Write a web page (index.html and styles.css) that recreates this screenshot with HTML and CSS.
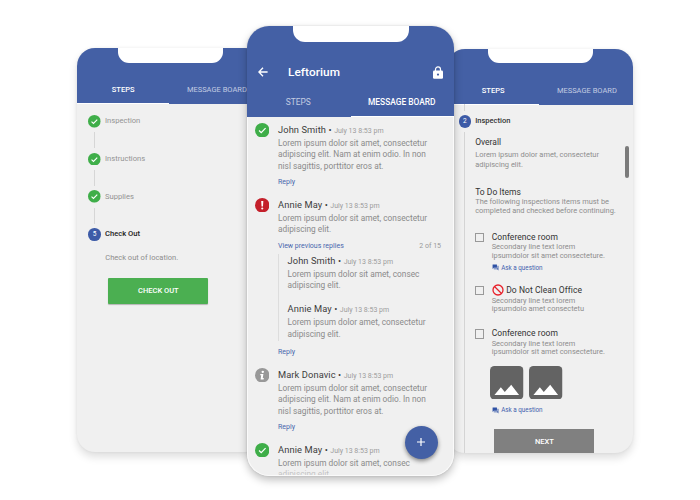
FILE: index.html
```html
<!DOCTYPE html>
<html lang="en">
<head>
<meta charset="utf-8">
<title>Leftorium</title>
<link rel="stylesheet" href="styles.css">
</head>
<body>
<svg width="0" height="0" class="defs">
  <symbol id="check" viewBox="0 0 14 14"><circle cx="7" cy="7" r="7" fill="#3fae49"/><path d="M3.9 7.3 6 9.3 10.2 5" fill="none" stroke="#fff" stroke-width="1.2"/></symbol>
  <symbol id="alert" viewBox="0 0 14 14"><circle cx="7" cy="7" r="7" fill="#c4202b"/><path d="M6 2.8h2L7.7 8.2H6.3z" fill="#fff"/><circle cx="7" cy="10.2" r="1" fill="#fff"/></symbol>
  <symbol id="info" viewBox="0 0 14 14"><circle cx="7" cy="7" r="7" fill="#989898"/><circle cx="7.5" cy="3.7" r="1.15" fill="#fff"/><path d="M5.2 5.7h2.9L7.5 9.6h1L8.3 11H5.4L6 7H5z" fill="#fff"/></symbol>
  <symbol id="chat" viewBox="0 0 24 24"><path d="M21 6h-2v9H6v2c0 .55.45 1 1 1h11l4 4V7c0-.55-.45-1-1-1zm-4 6V3c0-.55-.45-1-1-1H3c-.55 0-1 .45-1 1v14l4-4h10c.55 0 1-.45 1-1z" fill="#2f52a5"/></symbol>
  <symbol id="photo" viewBox="0 0 34 34"><rect width="34" height="34" rx="4.5" fill="#636363"/><path d="M4.5 29.5 11 21.5l4 5L21.5 19l8 10.5z" fill="#fff"/></symbol>
</svg>
<main class="stage">
  <section class="phone side">
    <header class="bar">
      <div class="notch"></div>
      <nav class="tabs"><span class="tab active">STEPS</span><span class="tab">MESSAGE BOARD</span></nav>
    </header>
    <div class="steps">
      <div class="step"><svg class="dot"><use href="#check"/></svg><span>Inspection</span></div>
      <div class="link"></div>
      <div class="step"><svg class="dot"><use href="#check"/></svg><span>Instructions</span></div>
      <div class="link"></div>
      <div class="step"><svg class="dot"><use href="#check"/></svg><span>Supplies</span></div>
      <div class="link"></div>
      <div class="step current"><b class="num">5</b><span>Check Out</span></div>
      <p class="hint">Check out of location.</p>
      <div class="btn green">CHECK OUT</div>
    </div>
  </section>

  <section class="phone main">
    <header class="bar">
      <div class="notch"></div>
      <div class="title">
        <svg class="back" viewBox="0 0 10 10"><path d="M9.6 5H1M5 .8.9 5 5 9.2" fill="none" stroke="#fff" stroke-width="1.3"/></svg>
        <h1>Leftorium</h1>
        <svg class="lock" viewBox="0 0 10 13"><path d="M2.5 5V3.4a2.5 2.5 0 0 1 5 0V5" fill="none" stroke="#fff" stroke-width="1.2"/><rect y="4.5" width="10" height="8.3" rx="1.2" fill="#fff"/><circle cx="5" cy="8.6" r="1.1" fill="#4460a5"/></svg>
      </div>
      <nav class="tabs"><span class="tab">STEPS</span><span class="tab active">MESSAGE BOARD</span></nav>
    </header>
    <div class="feed">
      <article class="post">
        <svg class="mark"><use href="#check"/></svg>
        <div class="content">
          <div class="name">John Smith • <time>July 13 8:53 pm</time></div>
          <p class="text">Lorem ipsum dolor sit amet, consectetur<br>adipiscing elit. Nam at enim odio. In non<br>nisl sagittis, porttitor eros at.</p>
          <a class="reply">Reply</a>
        </div>
      </article>
      <article class="post">
        <svg class="mark"><use href="#alert"/></svg>
        <div class="content">
          <div class="name">Annie May • <time>July 13 8:53 pm</time></div>
          <p class="text">Lorem ipsum dolor sit amet, consectetur<br>adipiscing elit.</p>
          <div class="previous"><a>View previous replies</a><span>2 of 15</span></div>
          <div class="thread">
            <div class="name">John Smith • <time>July 13 8:53 pm</time></div>
            <p class="text">Lorem ipsum dolor sit amet, consec<br>adipiscing elit.</p>
            <div class="name second">Annie May • <time>July 13 8:53 pm</time></div>
            <p class="text">Lorem ipsum dolor amet, consectetur<br>adipiscing elit.</p>
          </div>
          <a class="reply after">Reply</a>
        </div>
      </article>
      <article class="post">
        <svg class="mark"><use href="#info"/></svg>
        <div class="content">
          <div class="name">Mark Donavic • <time>July 13 8:53 pm</time></div>
          <p class="text">Lorem ipsum dolor sit amet, consectetur<br>adipiscing elit. Nam at enim odio. In non<br>nisl sagittis, porttitor eros at.</p>
          <a class="reply">Reply</a>
        </div>
      </article>
      <article class="post last">
        <svg class="mark"><use href="#check"/></svg>
        <div class="content">
          <div class="name">Annie May • <time>July 13 8:53 pm</time></div>
          <p class="text">Lorem ipsum dolor sit amet, consec<br><span class="faded">adipiscing elit.</span></p>
        </div>
      </article>
    </div>
    <div class="fab"><svg viewBox="0 0 10 10"><path d="M5 1v8M1 5h8" stroke="#fff" stroke-width="1.2"/></svg></div>
  </section>

  <section class="phone side right">
    <header class="bar">
      <div class="notch"></div>
      <nav class="tabs"><span class="tab active">STEPS</span><span class="tab">MESSAGE BOARD</span></nav>
    </header>
    <div class="inspect">
      <div class="rail"><i class="stub"></i><b class="num">2</b><i class="line"></i></div>
      <div class="form">
        <div class="heading">Inspection</div>
        <h2>Overall</h2>
        <p class="para wide">Lorem ipsum dolor amet, consectetur<br>adipiscing elit.</p>
        <h2 class="todo">To Do Items</h2>
        <p class="para">The following inspections items must be<br>completed and checked before continuing.</p>
        <div class="item">
          <i class="box"></i>
          <div><h3>Conference room</h3><p class="para">Secondary line text lorem<br>ipsumdolor sit amet consecteture.</p>
          <a class="ask"><svg><use href="#chat"/></svg>Ask a question</a></div>
        </div>
        <div class="item second">
          <i class="box"></i>
          <div><h3><svg class="ban" viewBox="0 0 12 12"><circle cx="6" cy="6" r="5" fill="none" stroke="#e8212b" stroke-width="1.3"/><path d="m2.5 2.5 7 7" stroke="#e8212b" stroke-width="1.3"/></svg>Do Not Clean Office</h3><p class="para">Secondary line text lorem<br>ipsumdolo amet consectetu</p></div>
        </div>
        <div class="item third">
          <i class="box"></i>
          <div><h3>Conference room</h3><p class="para">Secondary line text lorem<br>ipsumdolor sit amet consecteture.</p>
          <div class="photos"><svg><use href="#photo"/></svg><svg><use href="#photo"/></svg></div>
          <a class="ask low"><svg><use href="#chat"/></svg>Ask a question</a></div>
        </div>
        <div class="btn grey">NEXT</div>
      </div>
      <i class="scroll"></i>
    </div>
  </section>
</main>
</body>
</html>
```
FILE: styles.css
```css
* { box-sizing: border-box; margin: 0; padding: 0; }
body { width: 700px; height: 500px; overflow: hidden; background: #fff; font-family: Roboto, sans-serif; color: #333; white-space: nowrap; }
svg { display: block; flex: none; }
i, a { font-style: normal; display: block; }
.defs { position: absolute; }
.stage { display: flex; align-items: flex-start; padding: 26px 0 0 77px; }

.phone { flex: none; display: flex; flex-direction: column; background: #f0f0f0; }
.side { width: 186px; height: 404px; margin-top: 22px; border-radius: 18px; box-shadow: 0 5px 9px rgba(0,0,0,.13), 0 0 3px rgba(0,0,0,.06); }
.right { margin-left: -7px; margin-top: 23px; }
.main { position: relative; z-index: 1; width: 207px; height: 449.5px; margin-left: -16px; border-radius: 22px; box-shadow: 0 4px 8px rgba(0,0,0,.25), 0 0 2px rgba(0,0,0,.15); }

.bar { flex: none; display: flex; flex-direction: column; align-items: center; background: #4460a5; color: #fff; height: 55px; border-radius: 18px 18px 0 0; }
.main .bar { height: 91px; border-radius: 22px 22px 0 0; }
.notch { width: 105px; height: 14.5px; background: #fff; border-radius: 0 0 11px 11px; margin-bottom: 14.5px; flex: none; }
.main .notch { width: 116px; height: 15.5px; border-radius: 0 0 12px 12px; margin-bottom: 23px; }
.right .notch { height: 14px; margin-bottom: 15px; }
.tabs { display: flex; width: 100%; flex: 1; }
.tab { flex: 1; text-align: center; font-size: 7.5px; line-height: 26px; color: #c3cce2; border-bottom: 1.5px solid #4460a5; }
.tab.active { color: #fff; font-weight: 500; border-color: #fff; }
.main .tab { font-size: 8.4px; line-height: 21px; padding-right: 1px; }
.side .tab:last-child { padding-left: 1.5px; }

.title { display: flex; align-items: center; width: 100%; height: 15px; margin-bottom: 12px; padding: 0 11px 0 10.5px; }
.back { width: 10px; height: 10px; }
.title h1 { flex: 1; margin-left: 20.5px; font-size: 11.8px; line-height: 16px; font-weight: 500; letter-spacing: .08px; }
.lock { width: 10px; height: 13px; }

.steps { padding: 12px 0 0 11.3px; }
.step { display: flex; align-items: center; gap: 4px; height: 12.7px; font-size: 7.6px; line-height: 12px; color: #939393; }
.current { color: #222; font-weight: 500; }
.dot, .num { width: 12.7px; height: 12.7px; }
.num { display: block; flex: none; border-radius: 50%; background: #3d5ba7; color: #fff; font-size: 6.5px; font-weight: 400; line-height: 12.7px; text-align: center; }
.link { width: 1px; height: 16px; margin: 4.5px 0 4.5px 6px; background: #d6d6d6; }
.hint { margin: 11px 0 0 17px; font-size: 7.5px; line-height: 12px; color: #8d8d8d; }
.btn { width: 100.5px; height: 26.5px; border-radius: 1px; color: #fff; font-size: 7.5px; font-weight: 500; line-height: 26px; text-align: center; }
.green { margin: 14px 0 0 19.3px; padding-left: 1px; background: #4baf51; box-shadow: 0 1px 1px rgba(0,0,0,.25); }

.feed { flex: 1; padding: 5.5px 0 0 6.5px; overflow: hidden; border: 1px solid #fafafa; border-top: 0; border-radius: 0 0 22px 22px; }
.post { display: flex; gap: 9px; margin-bottom: 10.4px; }
.mark { width: 14.5px; height: 14.5px; }
.mark use { width: 14.5px; height: 14.5px; }
.content { width: 163px; }
.name { height: 14px; line-height: 14px; font-size: 9.3px; letter-spacing: .1px; color: #3d3d3d; }
.name time { font-size: 7px; letter-spacing: 0; color: #9c9c9c; }
.text { margin-top: 1px; font-size: 8.3px; line-height: 11.7px; color: #8b8b8b; }
.reply, .previous { font-size: 7px; line-height: 10px; color: #4766ad; }
.reply { margin-top: 4.5px; }
.previous { display: flex; justify-content: space-between; margin-top: 4.7px; }
.previous span { color: #999; }
.thread { margin-top: 3px; padding-left: 8.5px; border-left: 1px solid #ddd; }
.thread .second { margin-top: 10.3px; }
.after { margin-top: 6.5px; }
.faded { opacity: .45; }
.fab { position: absolute; right: 16.5px; bottom: 17px; width: 33px; height: 33px; border-radius: 50%; background: #4460a5; box-shadow: 0 2px 4px rgba(0,0,0,.45); display: grid; place-items: center; }
.fab svg { width: 10px; height: 10px; }

.inspect { flex: 1; display: flex; align-items: flex-start; overflow: hidden; border-radius: 0 0 18px 18px; }
.rail { width: 12.7px; margin-left: 11.5px; flex: none; display: flex; flex-direction: column; align-items: center; }
.stub { width: 1px; height: 7px; margin-bottom: 4px; background: #d4d4d4; }
.line { width: 1px; height: 330px; margin-top: 4px; background: #d4d4d4; }
.form { width: 146px; margin-left: 4px; padding-top: 11px; }
.heading { font-size: 7.5px; line-height: 12px; font-weight: 500; color: #333; }
.form h2 { margin-top: 8.8px; font-size: 8.5px; line-height: 12px; font-weight: 400; color: #333; }
.form h3 { display: flex; align-items: center; gap: 2.5px; height: 12px; font-size: 8.5px; font-weight: 400; letter-spacing: .06px; line-height: 12px; color: #333; }
.para { font-size: 7.45px; line-height: 8.6px; color: #8e8e8e; }
.wide { line-height: 10.3px; margin-top: 2px; }
.form .todo { margin-top: 15.5px; }
.form .todo + .para { margin-top: .6px; }
.item { display: flex; margin-top: 15px; }
.item h3 + .para { margin-top: .6px; }
.item.second { margin-top: 11px; }
.item.third { margin-top: 13.4px; }
.box { width: 9.5px; height: 9.5px; margin: 2px 7.5px 0 -.5px; border: 1px solid #999; flex: none; }
.ask { display: flex; align-items: center; gap: 2.5px; height: 10px; margin-top: 2.5px; font-size: 6.3px; color: #3f5fae; }
.ask svg { width: 7px; height: 7px; }
.ban { width: 12px; height: 12px; }
.photos { display: flex; gap: 5.5px; margin: 9px 0 0 -1.5px; }
.photos svg { width: 33.5px; height: 33.5px; }
.low { margin-top: 5.8px; }
.grey { margin: 13.5px 0 0 18.5px; padding-left: 1px; background: #808080; border-radius: 0; }
.scroll { width: 4.2px; height: 32px; margin: 41.5px 0 0 3.5px; border-radius: 2.1px; background: #7b7b7b; }
```
